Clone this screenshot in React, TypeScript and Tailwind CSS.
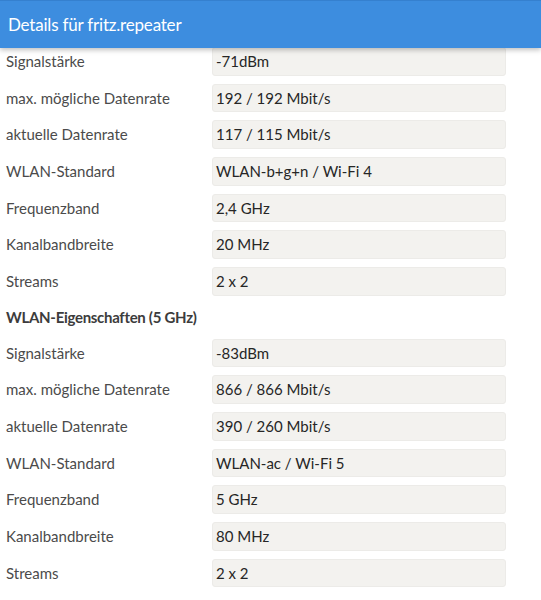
import React from 'react';

type Row = { label: string; value: string };

const band24: Row[] = [
  { label: 'Signalstärke', value: '-71dBm' },
  { label: 'max. mögliche Datenrate', value: '192 / 192 Mbit/s' },
  { label: 'aktuelle Datenrate', value: '117 / 115 Mbit/s' },
  { label: 'WLAN-Standard', value: 'WLAN-b+g+n / Wi-Fi 4' },
  { label: 'Frequenzband', value: '2,4 GHz' },
  { label: 'Kanalbandbreite', value: '20 MHz' },
  { label: 'Streams', value: '2 x 2' },
];

const band5: Row[] = [
  { label: 'Signalstärke', value: '-83dBm' },
  { label: 'max. mögliche Datenrate', value: '866 / 866 Mbit/s' },
  { label: 'aktuelle Datenrate', value: '390 / 260 Mbit/s' },
  { label: 'WLAN-Standard', value: 'WLAN-ac / Wi-Fi 5' },
  { label: 'Frequenzband', value: '5 GHz' },
  { label: 'Kanalbandbreite', value: '80 MHz' },
  { label: 'Streams', value: '2 x 2' },
];

const DetailRow = ({ label, value }: Row) => (
  <div className="flex items-center h-[28.67px] mb-2">
    <div className="w-[206px] shrink-0 text-[15px] text-[#4b4b4b]">{label}</div>
    <div className="w-[294px] h-full flex items-center px-[3px] bg-[#f3f2ef] rounded-[3px] border border-[#ecebe8] text-[15px] text-[#262626]">
      {value}
    </div>
  </div>
);

export default function App() {
  return (
    <div className="w-[541px] h-[600px] overflow-hidden bg-white" style={{ fontFamily: 'Lato, "Open Sans", sans-serif' }}>
      {/* Kopfzeile */}
      <div className="relative z-10 h-12 flex items-center px-2 bg-[#3d8ddf] border-t border-[#3580cf] shadow-[0_2px_5px_rgba(0,0,0,0.25)]">
        <span className="text-[17px] tracking-[-0.2px] text-white">Details für fritz.repeater</span>
      </div>

      <div className="pl-[6px] -mt-px">
        {band24.map((r, i) => (
          <DetailRow key={'a' + i} {...r} />
        ))}
        <div className="h-[27px] flex items-center text-[15px] tracking-[-0.3px] font-bold text-[#3c3c3c] mb-2">
          WLAN-Eigenschaften (5 GHz)
        </div>
        {band5.map((r, i) => (
          <DetailRow key={'b' + i} {...r} />
        ))}
      </div>
    </div>
  );
}
